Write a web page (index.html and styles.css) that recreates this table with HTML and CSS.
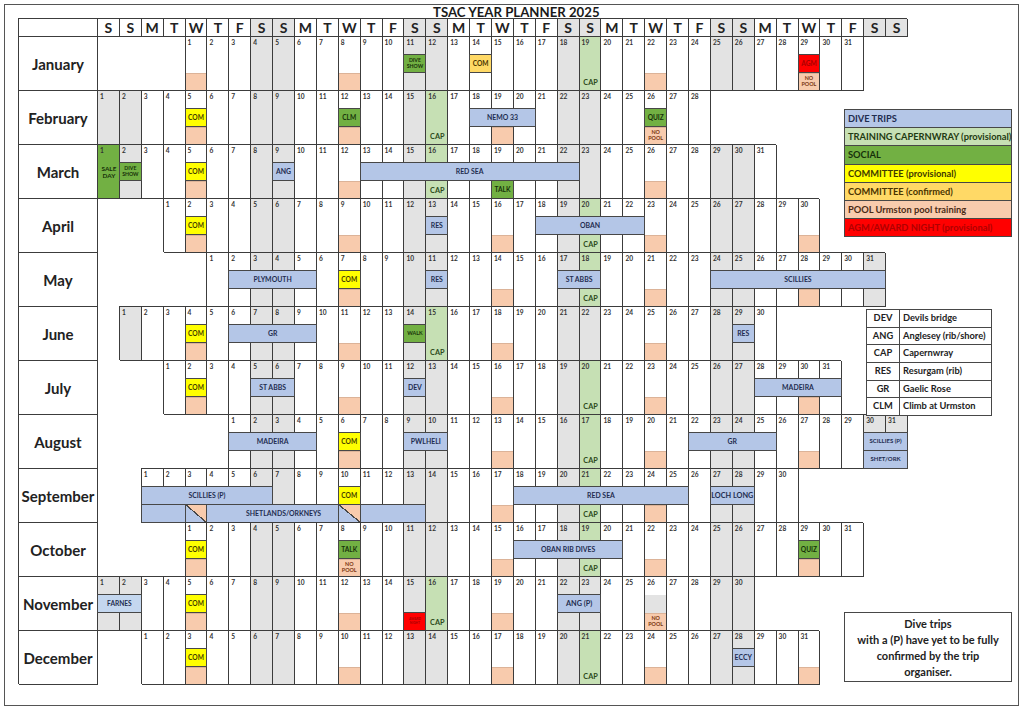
FILE: index.html
```html
<!DOCTYPE html>
<html>
<head>
<meta charset="utf-8">
<title>TSAC Year Planner 2025</title>
<link rel="stylesheet" href="styles.css">
</head>
<body>
<div class="frame">
  <div class="title">TSAC YEAR PLANNER 2025</div>
  <div class="hdr">
    <div class="hcell"></div>
    <div class="hcell">S</div><div class="hcell">S</div><div class="hcell">M</div><div class="hcell">T</div><div class="hcell">W</div><div class="hcell">T</div><div class="hcell">F</div>
    <div class="hcell w">S</div><div class="hcell w">S</div><div class="hcell">M</div><div class="hcell">T</div><div class="hcell">W</div><div class="hcell">T</div><div class="hcell">F</div>
    <div class="hcell w">S</div><div class="hcell w">S</div><div class="hcell">M</div><div class="hcell">T</div><div class="hcell">W</div><div class="hcell">T</div><div class="hcell">F</div>
    <div class="hcell w">S</div><div class="hcell w">S</div><div class="hcell">M</div><div class="hcell">T</div><div class="hcell">W</div><div class="hcell">T</div><div class="hcell">F</div>
    <div class="hcell w">S</div><div class="hcell w">S</div><div class="hcell">M</div><div class="hcell">T</div><div class="hcell">W</div><div class="hcell">T</div><div class="hcell">F</div>
    <div class="hcell w">S</div><div class="hcell w">S</div>
  </div>

  <!-- January -->
  <div class="month">
    <div class="days">
      <div class="mlabel">January</div>
      <div class="day c5">1</div><div class="day">2</div><div class="day">3</div><div class="day w">4</div><div class="day w">5</div><div class="day">6</div><div class="day">7</div><div class="day">8</div><div class="day">9</div><div class="day">10</div><div class="day w">11</div><div class="day w">12</div><div class="day">13</div><div class="day">14</div><div class="day">15</div><div class="day">16</div><div class="day">17</div><div class="day w">18</div><div class="day g">19</div><div class="day">20</div><div class="day">21</div><div class="day">22</div><div class="day">23</div><div class="day">24</div><div class="day w">25</div><div class="day w">26</div><div class="day">27</div><div class="day">28</div><div class="day">29</div><div class="day">30</div><div class="day">31</div>
    </div>
    <div class="ev">
      <div class="pool b c5"></div>
      <div class="pool b c12"></div>
      <div class="bx soc m c15 sm">DIVE<br>SHOW</div>
      <div class="bx cc m c18">COM</div>
      <div class="cap b c23">CAP</div>
      <div class="pool b c26"></div>
      <div class="bx agm m c33">AGM</div>
      <div class="pool b c33">NO<br>POOL</div>
    </div>
  </div>

  <!-- February -->
  <div class="month">
    <div class="days">
      <div class="mlabel">February</div>
      <div class="day w c1">1</div><div class="day w">2</div><div class="day">3</div><div class="day">4</div><div class="day">5</div><div class="day">6</div><div class="day">7</div><div class="day w">8</div><div class="day w">9</div><div class="day">10</div><div class="day">11</div><div class="day">12</div><div class="day">13</div><div class="day">14</div><div class="day w">15</div><div class="day g">16</div><div class="day">17</div><div class="day">18</div><div class="day">19</div><div class="day">20</div><div class="day">21</div><div class="day w">22</div><div class="day w">23</div><div class="day">24</div><div class="day">25</div><div class="day">26</div><div class="day">27</div><div class="day">28</div>
    </div>
    <div class="ev">
      <div class="bx cp m c5">COM</div>
      <div class="pool b c5"></div>
      <div class="bx soc m c12">CLM</div>
      <div class="pool b c12"></div>
      <div class="cap b c16">CAP</div>
      <div class="bx dive m c18 sp3">NEMO 33</div>
      <div class="pool b c19"></div>
      <div class="bx soc m c26">QUIZ</div>
      <div class="pool b c26">NO<br>POOL</div>
    </div>
  </div>

  <!-- March -->
  <div class="month">
    <div class="days">
      <div class="mlabel">March</div>
      <div class="day s c1">1</div><div class="day w">2</div><div class="day">3</div><div class="day">4</div><div class="day">5</div><div class="day">6</div><div class="day">7</div><div class="day w">8</div><div class="day w">9</div><div class="day">10</div><div class="day">11</div><div class="day">12</div><div class="day">13</div><div class="day">14</div><div class="day w">15</div><div class="day g">16</div><div class="day">17</div><div class="day">18</div><div class="day">19</div><div class="day">20</div><div class="day">21</div><div class="day w">22</div><div class="day w">23</div><div class="day">24</div><div class="day">25</div><div class="day">26</div><div class="day">27</div><div class="day">28</div><div class="day w">29</div><div class="day w">30</div><div class="day">31</div>
    </div>
    <div class="ev">
      <div class="txt m c1">SALE<br>DAY</div>
      <div class="bx soc m c2 sm">DIVE<br>SHOW</div>
      <div class="bx cp m c5">COM</div>
      <div class="pool b c5"></div>
      <div class="bx dive m c9">ANG</div>
      <div class="pool b c12"></div>
      <div class="bx dive m c13 sp10">RED SEA</div>
      <div class="cap b c16">CAP</div>
      <div class="bx soc b c19">TALK</div>
      <div class="pool b c26"></div>
    </div>
  </div>

  <!-- April -->
  <div class="month">
    <div class="days">
      <div class="mlabel">April</div>
      <div class="day c4">1</div><div class="day">2</div><div class="day">3</div><div class="day">4</div><div class="day w">5</div><div class="day w">6</div><div class="day">7</div><div class="day">8</div><div class="day">9</div><div class="day">10</div><div class="day">11</div><div class="day w">12</div><div class="day w">13</div><div class="day">14</div><div class="day">15</div><div class="day">16</div><div class="day">17</div><div class="day">18</div><div class="day w">19</div><div class="day g">20</div><div class="day">21</div><div class="day">22</div><div class="day">23</div><div class="day">24</div><div class="day">25</div><div class="day w">26</div><div class="day w">27</div><div class="day">28</div><div class="day">29</div><div class="day">30</div>
    </div>
    <div class="ev">
      <div class="bx cp m c5">COM</div>
      <div class="pool b c5"></div>
      <div class="pool b c12"></div>
      <div class="bx dive m c16">RES</div>
      <div class="pool b c19"></div>
      <div class="bx dive m c21 sp5">OBAN</div>
      <div class="cap b c23">CAP</div>
      <div class="pool b c26"></div>
      <div class="pool b c33"></div>
    </div>
  </div>

  <!-- May -->
  <div class="month">
    <div class="days">
      <div class="mlabel">May</div>
      <div class="day c6">1</div><div class="day">2</div><div class="day w">3</div><div class="day w">4</div><div class="day">5</div><div class="day">6</div><div class="day">7</div><div class="day">8</div><div class="day">9</div><div class="day w">10</div><div class="day w">11</div><div class="day">12</div><div class="day">13</div><div class="day">14</div><div class="day">15</div><div class="day">16</div><div class="day w">17</div><div class="day g">18</div><div class="day">19</div><div class="day">20</div><div class="day">21</div><div class="day">22</div><div class="day">23</div><div class="day w">24</div><div class="day w">25</div><div class="day">26</div><div class="day">27</div><div class="day">28</div><div class="day">29</div><div class="day">30</div><div class="day w">31</div>
    </div>
    <div class="ev">
      <div class="bx dive m c7 sp4">PLYMOUTH</div>
      <div class="bx cp m c12">COM</div>
      <div class="pool b c12"></div>
      <div class="bx dive m c16">RES</div>
      <div class="pool b c19"></div>
      <div class="bx dive m c22 sp2">ST ABBS</div>
      <div class="cap b c23">CAP</div>
      <div class="pool b c26"></div>
      <div class="bx dive m c29 sp8">SCILLIES</div>
      <div class="pool b c33"></div>
    </div>
  </div>

  <!-- June -->
  <div class="month">
    <div class="days">
      <div class="mlabel">June</div>
      <div class="day w c2">1</div><div class="day">2</div><div class="day">3</div><div class="day">4</div><div class="day">5</div><div class="day">6</div><div class="day w">7</div><div class="day w">8</div><div class="day">9</div><div class="day">10</div><div class="day">11</div><div class="day">12</div><div class="day">13</div><div class="day w">14</div><div class="day g">15</div><div class="day">16</div><div class="day">17</div><div class="day">18</div><div class="day">19</div><div class="day">20</div><div class="day w">21</div><div class="day w">22</div><div class="day">23</div><div class="day">24</div><div class="day">25</div><div class="day">26</div><div class="day">27</div><div class="day w">28</div><div class="day w">29</div><div class="day">30</div>
    </div>
    <div class="ev">
      <div class="bx cp m c5">COM</div>
      <div class="pool b c5"></div>
      <div class="bx dive m c7 sp4">GR</div>
      <div class="pool b c12"></div>
      <div class="bx soc m c15 xs">WALK</div>
      <div class="cap b c16">CAP</div>
      <div class="pool b c19"></div>
      <div class="pool b c26"></div>
      <div class="bx dive m c30">RES</div>
    </div>
  </div>

  <!-- July -->
  <div class="month">
    <div class="days">
      <div class="mlabel">July</div>
      <div class="day c4">1</div><div class="day">2</div><div class="day">3</div><div class="day">4</div><div class="day w">5</div><div class="day w">6</div><div class="day">7</div><div class="day">8</div><div class="day">9</div><div class="day">10</div><div class="day">11</div><div class="day w">12</div><div class="day w">13</div><div class="day">14</div><div class="day">15</div><div class="day">16</div><div class="day">17</div><div class="day">18</div><div class="day w">19</div><div class="day g">20</div><div class="day">21</div><div class="day">22</div><div class="day">23</div><div class="day">24</div><div class="day">25</div><div class="day w">26</div><div class="day w">27</div><div class="day">28</div><div class="day">29</div><div class="day">30</div><div class="day">31</div>
    </div>
    <div class="ev">
      <div class="bx cp m c5">COM</div>
      <div class="pool b c5"></div>
      <div class="bx dive m c8 sp2">ST ABBS</div>
      <div class="pool b c12"></div>
      <div class="bx dive m c15">DEV</div>
      <div class="pool b c19"></div>
      <div class="cap b c23">CAP</div>
      <div class="pool b c26"></div>
      <div class="bx dive m c31 sp4">MADEIRA</div>
      <div class="pool b c33"></div>
    </div>
  </div>

  <!-- August -->
  <div class="month">
    <div class="days">
      <div class="mlabel">August</div>
      <div class="day c7">1</div><div class="day w">2</div><div class="day w">3</div><div class="day">4</div><div class="day">5</div><div class="day">6</div><div class="day">7</div><div class="day">8</div><div class="day w">9</div><div class="day w">10</div><div class="day">11</div><div class="day">12</div><div class="day">13</div><div class="day">14</div><div class="day">15</div><div class="day w">16</div><div class="day g">17</div><div class="day">18</div><div class="day">19</div><div class="day">20</div><div class="day">21</div><div class="day">22</div><div class="day w">23</div><div class="day w">24</div><div class="day">25</div><div class="day">26</div><div class="day">27</div><div class="day">28</div><div class="day">29</div><div class="day w">30</div><div class="day w">31</div>
    </div>
    <div class="ev">
      <div class="bx dive m c7 sp4">MADEIRA</div>
      <div class="bx cp m c12">COM</div>
      <div class="pool b c12"></div>
      <div class="bx dive m c15 sp2">PWLHELI</div>
      <div class="pool b c19"></div>
      <div class="cap b c23">CAP</div>
      <div class="pool b c26"></div>
      <div class="bx dive m c28 sp4">GR</div>
      <div class="pool b c33"></div>
      <div class="bx dive m c36 sp2 sm2">SCILLIES (P)</div>
      <div class="bx dive b c36 sp2 sm2">SHET/ORK</div>
    </div>
  </div>

  <!-- September -->
  <div class="month">
    <div class="days">
      <div class="mlabel">September</div>
      <div class="day c3">1</div><div class="day">2</div><div class="day">3</div><div class="day">4</div><div class="day">5</div><div class="day w">6</div><div class="day w">7</div><div class="day">8</div><div class="day">9</div><div class="day">10</div><div class="day">11</div><div class="day">12</div><div class="day w">13</div><div class="day w">14</div><div class="day">15</div><div class="day">16</div><div class="day">17</div><div class="day">18</div><div class="day">19</div><div class="day w">20</div><div class="day g">21</div><div class="day">22</div><div class="day">23</div><div class="day">24</div><div class="day">25</div><div class="day">26</div><div class="day w">27</div><div class="day w">28</div><div class="day">29</div><div class="day">30</div>
    </div>
    <div class="ev">
      <div class="bx dive m c3 sp6">SCILLIES (P)</div>
      <div class="bx dive b c3 sp13">SHETLANDS/ORKNEYS</div>
      <div class="bx diag b c5"></div>
      <div class="bx cp m c12">COM</div>
      <div class="bx diag b c12"></div>
      <div class="pool b c19"></div>
      <div class="bx dive m c20 sp8">RED SEA</div>
      <div class="cap b c23">CAP</div>
      <div class="pool b c26"></div>
      <div class="bx dive m c29 sp2 big">LOCH LONG</div>
    </div>
  </div>

  <!-- October -->
  <div class="month">
    <div class="days">
      <div class="mlabel">October</div>
      <div class="day c5">1</div><div class="day">2</div><div class="day">3</div><div class="day w">4</div><div class="day w">5</div><div class="day">6</div><div class="day">7</div><div class="day">8</div><div class="day">9</div><div class="day">10</div><div class="day w">11</div><div class="day w">12</div><div class="day">13</div><div class="day">14</div><div class="day">15</div><div class="day">16</div><div class="day">17</div><div class="day w">18</div><div class="day g">19</div><div class="day">20</div><div class="day">21</div><div class="day">22</div><div class="day">23</div><div class="day">24</div><div class="day w">25</div><div class="day w">26</div><div class="day">27</div><div class="day">28</div><div class="day">29</div><div class="day">30</div><div class="day">31</div>
    </div>
    <div class="ev">
      <div class="bx cp m c5">COM</div>
      <div class="pool b c5"></div>
      <div class="bx soc m c12">TALK</div>
      <div class="pool b c12">NO<br>POOL</div>
      <div class="pool b c19"></div>
      <div class="bx dive m c20 sp5">OBAN RIB DIVES</div>
      <div class="cap b c23">CAP</div>
      <div class="pool b c26"></div>
      <div class="bx soc m c33">QUIZ</div>
      <div class="pool b c33"></div>
    </div>
  </div>

  <!-- November -->
  <div class="month">
    <div class="days">
      <div class="mlabel">November</div>
      <div class="day w c1">1</div><div class="day w">2</div><div class="day">3</div><div class="day">4</div><div class="day">5</div><div class="day">6</div><div class="day">7</div><div class="day w">8</div><div class="day w">9</div><div class="day">10</div><div class="day">11</div><div class="day">12</div><div class="day">13</div><div class="day">14</div><div class="day w">15</div><div class="day g">16</div><div class="day">17</div><div class="day">18</div><div class="day">19</div><div class="day">20</div><div class="day">21</div><div class="day w">22</div><div class="day w">23</div><div class="day">24</div><div class="day">25</div><div class="day">26</div><div class="day">27</div><div class="day">28</div><div class="day w">29</div><div class="day w">30</div>
    </div>
    <div class="ev">
      <div class="bx farnes m c1 sp2">FARNES</div>
      <div class="bx cp m c5">COM</div>
      <div class="pool b c5"></div>
      <div class="pool b c12"></div>
      <div class="bx agm b c15 tiny">AWARD<br>NIGHT</div>
      <div class="cap b c16">CAP</div>
      <div class="pool b c19"></div>
      <div class="bx dive m c22 sp2 big">ANG (P)</div>
      <div class="grey m c26"></div>
      <div class="pool b c26">NO<br>POOL</div>
    </div>
  </div>

  <!-- December -->
  <div class="month">
    <div class="days">
      <div class="mlabel">December</div>
      <div class="day c3">1</div><div class="day">2</div><div class="day">3</div><div class="day">4</div><div class="day">5</div><div class="day w">6</div><div class="day w">7</div><div class="day">8</div><div class="day">9</div><div class="day">10</div><div class="day">11</div><div class="day">12</div><div class="day w">13</div><div class="day w">14</div><div class="day">15</div><div class="day">16</div><div class="day">17</div><div class="day">18</div><div class="day">19</div><div class="day w">20</div><div class="day g">21</div><div class="day">22</div><div class="day">23</div><div class="day">24</div><div class="day">25</div><div class="day">26</div><div class="day w">27</div><div class="day w">28</div><div class="day">29</div><div class="day">30</div><div class="day">31</div>
    </div>
    <div class="ev">
      <div class="bx cp m c5">COM</div>
      <div class="pool b c5"></div>
      <div class="pool b c12"></div>
      <div class="pool b c19"></div>
      <div class="cap b c23">CAP</div>
      <div class="pool b c26"></div>
      <div class="bx dive m c30">ECCY</div>
      <div class="pool b c33"></div>
    </div>
  </div>

  <div class="legend">
    <div class="lrow l-dive">DIVE TRIPS</div>
    <div class="lrow l-train">TRAINING CAPERNWRAY (provisional)</div>
    <div class="lrow l-soc">SOCIAL</div>
    <div class="lrow l-cp">COMMITTEE (provisional)</div>
    <div class="lrow l-cc">COMMITTEE (confirmed)</div>
    <div class="lrow l-pool">POOL Urmston pool training</div>
    <div class="lrow l-agm">AGM/AWARD NIGHT (provisional)</div>
  </div>

  <div class="abbr">
    <div class="ak">DEV</div><div class="av">Devils bridge</div>
    <div class="ak">ANG</div><div class="av">Anglesey (rib/shore)</div>
    <div class="ak">CAP</div><div class="av">Capernwray</div>
    <div class="ak">RES</div><div class="av">Resurgam (rib)</div>
    <div class="ak">GR</div><div class="av">Gaelic Rose</div>
    <div class="ak">CLM</div><div class="av">Climb at Urmston</div>
  </div>

  <div class="note">Dive trips<br>with a (P) have yet to be fully<br>confirmed by the trip<br>organiser.</div>
</div>
</body>
</html>
```

FILE: styles.css
```css
* { box-sizing: border-box; }

body {
  margin: 0;
  background: #fff;
  color: #222;
  font-family: Lato, "Liberation Sans", sans-serif;
}

.frame {
  position: relative;
  margin: 4px;
  width: 1015px;
  height: 702px;
  border: 1px solid #555;
  padding-left: 14px;
}

.title {
  height: 14px;
  line-height: 14px;
  padding-left: 414px;
  font-size: 13.2px;
  font-weight: 700;
  color: #1a1a1a;
  white-space: nowrap;
}

.hdr, .days, .ev {
  display: grid;
  grid-template-columns: 79px repeat(37, 21.9px);
}

.hdr { grid-template-rows: 18px; height: 18px; }

.hcell {
  border-right: 1px solid #3c3c3c;
  border-bottom: 1px solid #3c3c3c;
  box-shadow: -1px -1px 0 #3c3c3c;
  background: #fff;
  text-align: center;
  font-size: 14px;
  line-height: 17px;
  font-weight: 700;
  color: #222;
}
.hcell.w { background: #e3e3e3; }

.month { display: grid; height: 54px; }
.month > * { grid-area: 1 / 1; }

.days { grid-template-rows: 54px; }
.ev { grid-template-rows: repeat(3, 18px); }

.mlabel {
  grid-column: 1;
  border-right: 1px solid #3c3c3c;
  border-bottom: 1px solid #3c3c3c;
  box-shadow: -1px -1px 0 #3c3c3c;
  display: flex;
  align-items: center;
  justify-content: center;
  font-size: 15px;
  font-weight: 700;
  color: #222;
}

.day {
  border-right: 1px solid #3c3c3c;
  border-bottom: 1px solid #3c3c3c;
  box-shadow: -1px -1px 0 #3c3c3c;
  background: #fff;
  padding: 2px 0 0 2px;
  font-size: 6.6px;
  line-height: 7px;
  font-weight: 700;
  color: #333;
}
.day.w { background: #e3e3e3; }
.day.g { background: #c6e0b4; }
.day.s { background: #72b043; }

.c1 { grid-column-start: 2; }  .c2 { grid-column-start: 3; }  .c3 { grid-column-start: 4; }
.c4 { grid-column-start: 5; }  .c5 { grid-column-start: 6; }  .c6 { grid-column-start: 7; }
.c7 { grid-column-start: 8; }  .c8 { grid-column-start: 9; }  .c9 { grid-column-start: 10; }
.c10 { grid-column-start: 11; } .c11 { grid-column-start: 12; } .c12 { grid-column-start: 13; }
.c13 { grid-column-start: 14; } .c14 { grid-column-start: 15; } .c15 { grid-column-start: 16; }
.c16 { grid-column-start: 17; } .c17 { grid-column-start: 18; } .c18 { grid-column-start: 19; }
.c19 { grid-column-start: 20; } .c20 { grid-column-start: 21; } .c21 { grid-column-start: 22; }
.c22 { grid-column-start: 23; } .c23 { grid-column-start: 24; } .c24 { grid-column-start: 25; }
.c25 { grid-column-start: 26; } .c26 { grid-column-start: 27; } .c27 { grid-column-start: 28; }
.c28 { grid-column-start: 29; } .c29 { grid-column-start: 30; } .c30 { grid-column-start: 31; }
.c31 { grid-column-start: 32; } .c32 { grid-column-start: 33; } .c33 { grid-column-start: 34; }
.c34 { grid-column-start: 35; } .c35 { grid-column-start: 36; } .c36 { grid-column-start: 37; }
.c37 { grid-column-start: 38; }

.sp2 { grid-column-end: span 2; }
.sp3 { grid-column-end: span 3; }
.sp4 { grid-column-end: span 4; }
.sp5 { grid-column-end: span 5; }
.sp6 { grid-column-end: span 6; }
.sp8 { grid-column-end: span 8; }
.sp10 { grid-column-end: span 10; }
.sp13 { grid-column-end: span 13; }

.m { grid-row: 2; }
.b { grid-row: 3; }

.bx {
  margin: -1px 0 0 -1px;
  border: 1px solid #474747;
  display: flex;
  align-items: center;
  justify-content: center;
  text-align: center;
  font-size: 6.6px;
  line-height: 1.05;
  font-weight: 700;
  white-space: nowrap;
}
.bx.sm { font-size: 5.2px; }
.bx.sm2 { font-size: 6px; }
.bx.xs { font-size: 5.3px; }
.bx.big { font-size: 7.3px; }
.bx.tiny { font-size: 3.2px; }

.dive { background: #b4c6e7; color: #1f2d50; font-size: 6.9px; }
.farnes { background: #c4d7ef; color: #1f2d50; }
.soc { background: #72b043; color: #17300a; }
.cp { background: #ffff00; color: #3f3a00; }
.cc { background: #ffd966; color: #4a3400; }
.agm { background: #ff0000; color: #a80000; }

.diag {
  background: linear-gradient(to bottom left, #f8cbad calc(50% - 0.6px), #474747 calc(50% - 0.6px), #474747 calc(50% + 0.6px), #b4c6e7 calc(50% + 0.6px));
}

.pool {
  margin: 0 1px 1px 0;
  background: #f8cbad;
  border-top: 1px solid #dcb398;
  display: flex;
  align-items: center;
  justify-content: center;
  text-align: center;
  font-size: 5.4px;
  line-height: 1.1;
  font-weight: 700;
  color: #7a3510;
}

.grey { margin: 0 1px 0 0; background: #e3e3e3; }

.cap {
  display: flex;
  align-items: center;
  justify-content: center;
  font-size: 7.3px;
  font-weight: 700;
  color: #2c4a1a;
}

.txt {
  display: flex;
  align-items: center;
  justify-content: center;
  text-align: center;
  font-size: 6.4px;
  line-height: 1.15;
  font-weight: 700;
  color: #17300a;
}

.legend {
  position: absolute;
  left: 839px;
  top: 104px;
  width: 168px;
  border: 1px solid #474747;
}
.lrow {
  height: 18.2px;
  border-top: 1px solid #474747;
  padding-left: 3px;
  font-size: 9.3px;
  line-height: 17px;
  font-weight: 700;
  white-space: nowrap;
}
.lrow:first-child { border-top: 0; height: 17.2px; }
.l-dive { background: #b4c6e7; color: #1f2d50; }
.l-train { background: #c6e0b4; color: #1f3a12; }
.l-soc { background: #72b043; color: #17300a; }
.l-cp { background: #ffff00; color: #3f3a00; }
.l-cc { background: #ffd966; color: #4a3400; }
.l-pool { background: #f8cbad; color: #4a2a15; }
.l-agm { background: #ff0000; color: #b00000; }

.abbr {
  position: absolute;
  left: 861px;
  top: 304px;
  display: grid;
  grid-template-columns: 33px 92px;
  grid-template-rows: repeat(6, 17.7px);
  border-top: 1px solid #474747;
  border-left: 1px solid #474747;
  background: #fff;
}
.ak, .av {
  border-right: 1px solid #474747;
  border-bottom: 1px solid #474747;
  font-size: 9.3px;
  font-weight: 700;
  line-height: 16.7px;
  color: #222;
  white-space: nowrap;
}
.ak { text-align: center; }
.av { padding-left: 3px; }

.note {
  position: absolute;
  left: 839px;
  top: 607px;
  width: 168px;
  height: 70px;
  border: 1px solid #474747;
  background: #fff;
  padding-top: 3px;
  text-align: center;
  font-size: 11px;
  line-height: 16px;
  font-weight: 700;
  color: #222;
}
```
